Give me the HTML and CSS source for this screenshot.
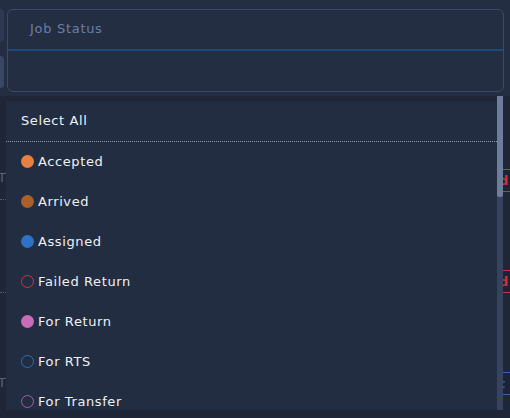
FILE: index.html
```html
<!DOCTYPE html>
<html>
<head>
<meta charset="utf-8">
<link rel="stylesheet" href="styles.css">
</head>
<body>
<div class="page">
  <div class="side-btns">
    <div class="side-btn a"></div>
    <div class="side-btn b"></div>
  </div>
  <div class="field">
    <div class="field-top"><span class="placeholder">Job Status</span></div>
    <div class="field-bottom"></div>
  </div>
  <div class="behind">
    <div class="ghost-left g1">T</div>
    <div class="ghost-dots d1"></div>
    <div class="ghost-dots d2"></div>
    <div class="ghost-left g2">T</div>
    <div class="ghost-right red r1">d</div>
    <div class="ghost-right red r2">d</div>
    <div class="ghost-right blue r3">t</div>
  </div>
  <div class="dropdown">
    <div class="list">
      <div class="row select-all">Select All</div>
      <div class="row"><span class="dot fill" style="--c:#e8813f"></span>Accepted</div>
      <div class="row"><span class="dot fill" style="--c:#a9612b"></span>Arrived</div>
      <div class="row"><span class="dot fill" style="--c:#2e72c6"></span>Assigned</div>
      <div class="row"><span class="dot ring" style="--c:#c83a44"></span>Failed Return</div>
      <div class="row"><span class="dot fill" style="--c:#c86bb9"></span>For Return</div>
      <div class="row"><span class="dot ring" style="--c:#2e6cb2"></span>For RTS</div>
      <div class="row"><span class="dot ring" style="--c:#a85ca2"></span>For Transfer</div>
    </div>
    <div class="scrollbar"><div class="thumb"></div></div>
  </div>
</div>
</body>
</html>
```
FILE: styles.css
```css
* { box-sizing: border-box; }
html, body { margin: 0; padding: 0; }
body {
  background: #1d2536;
  font-family: "DejaVu Sans", "Noto Sans", sans-serif;
  width: 510px;
  height: 418px;
  overflow: hidden;
}
.page {
  position: relative;
  width: 510px;
  height: 418px;
  background: linear-gradient(#242e42 0, #242e42 96px, #1e2638 96px);
}
.side-btns {
  position: absolute;
  left: -6px;
  top: 9px;
  display: flex;
  flex-direction: column;
  gap: 14px;
}
.side-btn {
  width: 10px;
  height: 33px;
  border-radius: 4px;
  background: #2f3a52;
}
.side-btn.b { background: #3a4762; height: 32px; }
.field {
  position: absolute;
  left: 7px;
  top: 9px;
  width: 497px;
  height: 83px;
  border: 1px solid #3a4a68;
  border-radius: 6px;
  background: #242e42;
  display: flex;
  flex-direction: column;
}
.field-top {
  height: 41px;
  border-bottom: 2px solid #1f4a80;
  border-radius: 6px 6px 0 0;
  display: flex;
  align-items: center;
  padding-left: 22px;
  padding-bottom: 2px;
}
.placeholder {
  color: #6a7ea6;
  font-size: 13px;
  letter-spacing: 0.7px;
}
.behind {
  position: absolute;
  inset: 0;
}
.ghost-left {
  position: absolute;
  left: 0;
  width: 6px;
  overflow: hidden;
  color: #55637e;
  font-size: 13px;
  line-height: 16px;
  text-indent: -2px;
}
.g1 { top: 170px; }
.g2 { top: 375px; }
.ghost-dots {
  position: absolute;
  left: 0;
  width: 6px;
  border-top: 1px dotted #4b5872;
}
.d1 { top: 199px; }
.d2 { top: 292px; }
.ghost-right {
  position: absolute;
  left: 503px;
  width: 7px;
  height: 23px;
  overflow: hidden;
  border-top: 1px solid;
  border-bottom: 1px solid;
  font-size: 13px;
  font-weight: bold;
  line-height: 21px;
  text-indent: -4px;
  background: #1c2334;
}
.red { color: #d2303a; border-color: #d2303a; }
.blue { color: #1f5fd0; border-color: #2a6ab8; }
.r1 { top: 169px; }
.r2 { top: 270px; }
.r3 { top: 372px; }
.dropdown {
  position: absolute;
  left: 6px;
  top: 96px;
  width: 497px;
  height: 314px;
  display: flex;
  background: #232d41;
  border-top: 5px solid #1e2637;
}
.list {
  flex: 1;
  overflow: hidden;
}
.row {
  height: 40px;
  display: flex;
  align-items: center;
  padding-left: 15px;
  padding-bottom: 2px;
  color: #eef1f6;
  font-size: 13px;
  font-weight: 500;
  letter-spacing: 0.6px;
}
.select-all {
  border-bottom: 1px dotted #8d9bb4;
  height: 41px;
  padding-bottom: 1px;
}
.dot {
  width: 13px;
  height: 13px;
  border-radius: 50%;
  margin-right: 4px;
  flex: none;
}
.dot.fill { background: var(--c); }
.dot.ring { border: 1.6px solid var(--c); }
.scrollbar {
  width: 6px;
  background: #36435c;
  position: relative;
  margin-top: -5px;
}
.thumb {
  height: 101px;
  background: #6e7d99;
  border-radius: 0 0 2px 2px;
}
```
